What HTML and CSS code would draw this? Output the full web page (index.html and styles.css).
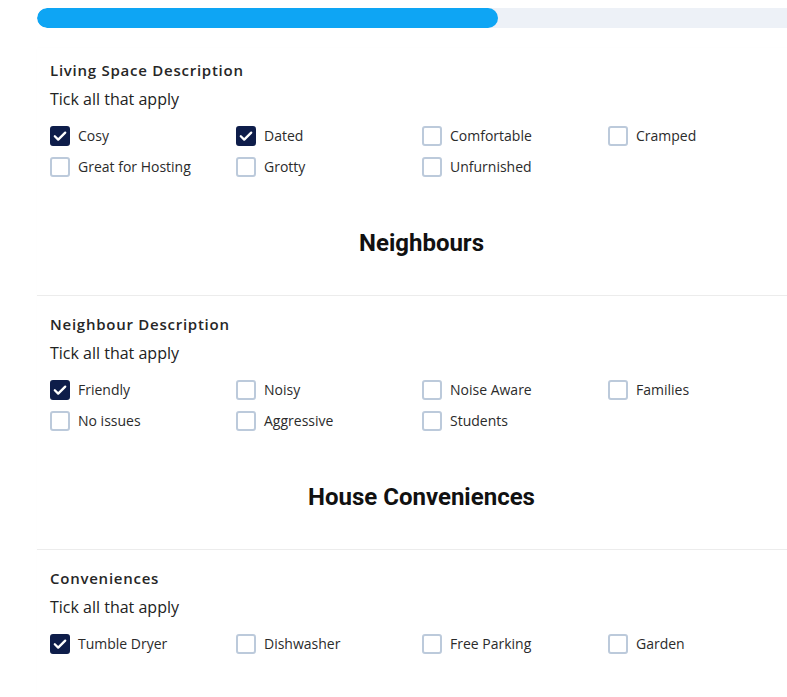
FILE: index.html
```html
<!DOCTYPE html>
<html lang="en">
<head>
<meta charset="utf-8">
<title>Survey</title>
<link rel="stylesheet" href="styles.css">
</head>
<body>
<div class="page">
  <div class="progress"><div class="progress-fill" style="width: 461px"></div></div>
  <div class="card">
    <section class="group">
      <h3 class="group-title">Living Space Description</h3>
      <p class="hint">Tick all that apply</p>
      <div class="options">
        <label class="opt"><span class="box checked"><svg viewBox="0 0 20 20"><path d="M4.8 10.2l3.4 3.4L15.2 6.6"/></svg></span>Cosy</label>
        <label class="opt"><span class="box checked"><svg viewBox="0 0 20 20"><path d="M4.8 10.2l3.4 3.4L15.2 6.6"/></svg></span>Dated</label>
        <label class="opt"><span class="box"></span>Comfortable</label>
        <label class="opt"><span class="box"></span>Cramped</label>
        <label class="opt"><span class="box"></span>Great for Hosting</label>
        <label class="opt"><span class="box"></span>Grotty</label>
        <label class="opt"><span class="box"></span>Unfurnished</label>
      </div>
    </section>
    <h2 class="heading">Neighbours</h2>
    <hr class="divider">
    <section class="group">
      <h3 class="group-title">Neighbour Description</h3>
      <p class="hint">Tick all that apply</p>
      <div class="options">
        <label class="opt"><span class="box checked"><svg viewBox="0 0 20 20"><path d="M4.8 10.2l3.4 3.4L15.2 6.6"/></svg></span>Friendly</label>
        <label class="opt"><span class="box"></span>Noisy</label>
        <label class="opt"><span class="box"></span>Noise Aware</label>
        <label class="opt"><span class="box"></span>Families</label>
        <label class="opt"><span class="box"></span>No issues</label>
        <label class="opt"><span class="box"></span>Aggressive</label>
        <label class="opt"><span class="box"></span>Students</label>
      </div>
    </section>
    <h2 class="heading">House Conveniences</h2>
    <hr class="divider">
    <section class="group">
      <h3 class="group-title">Conveniences</h3>
      <p class="hint">Tick all that apply</p>
      <div class="options">
        <label class="opt"><span class="box checked"><svg viewBox="0 0 20 20"><path d="M4.8 10.2l3.4 3.4L15.2 6.6"/></svg></span>Tumble Dryer</label>
        <label class="opt"><span class="box"></span>Dishwasher</label>
        <label class="opt"><span class="box"></span>Free Parking</label>
        <label class="opt"><span class="box"></span>Garden</label>
      </div>
    </section>
  </div>
</div>
</body>
</html>
```

FILE: styles.css
```css
html, body {
  margin: 0;
  padding: 0;
  background: #ffffff;
  overflow: hidden;
}
body {
  font-family: "Open Sans", "Noto Sans", sans-serif;
  color: #222;
}
.page {
  width: 769px;
  padding-left: 37px;
  padding-top: 8px;
}
.progress {
  height: 20px;
  width: 750px;
  background: #edf1f7;
  border-radius: 10px 0 0 10px;
  overflow: hidden;
}
.progress-fill {
  height: 20px;
  background: #0ea5f4;
  border-radius: 10px;
}
.card {
  margin-top: 20px;
  padding-top: 12px;
  padding-bottom: 40px;
  background: #fff;
  box-shadow: 0 0 2px rgba(0, 0, 0, 0.015);
}
.group {
  padding-left: 13px;
}
.group-title {
  margin: 0;
  font-size: 15px;
  line-height: 20px;
  font-weight: 600;
  letter-spacing: 0.75px;
  color: #262626;
}
.hint {
  margin: 8px 0 0;
  font-size: 16px;
  line-height: 22px;
  color: #222;
}
.options {
  margin-top: 10px;
  display: grid;
  grid-template-columns: repeat(4, 186px);
  grid-auto-rows: 31px;
}
.opt {
  display: flex;
  align-items: center;
  gap: 8px;
  font-size: 14px;
  color: #2b2b2b;
}
.box {
  box-sizing: border-box;
  width: 20px;
  height: 20px;
  border: 2px solid #bccadb;
  border-radius: 3px;
  background: #fff;
  display: flex;
  align-items: center;
  justify-content: center;
  flex: none;
}
.box.checked {
  background: #0e1d4a;
  border-color: #0e1d4a;
}
.box svg {
  width: 20px;
  height: 20px;
  flex: none;
}
.box svg path {
  fill: none;
  stroke: #fff;
  stroke-width: 2.3;
  stroke-linecap: round;
  stroke-linejoin: round;
}
.heading {
  margin: 46px 0 0;
  text-align: center;
  font-family: Roboto, "Liberation Sans", sans-serif;
  font-size: 24px;
  line-height: 30px;
  font-weight: 700;
  color: #111;
}
.divider {
  margin: 37px 0 18px;
  border: 0;
  height: 1px;
  background: #ececec;
}
```
